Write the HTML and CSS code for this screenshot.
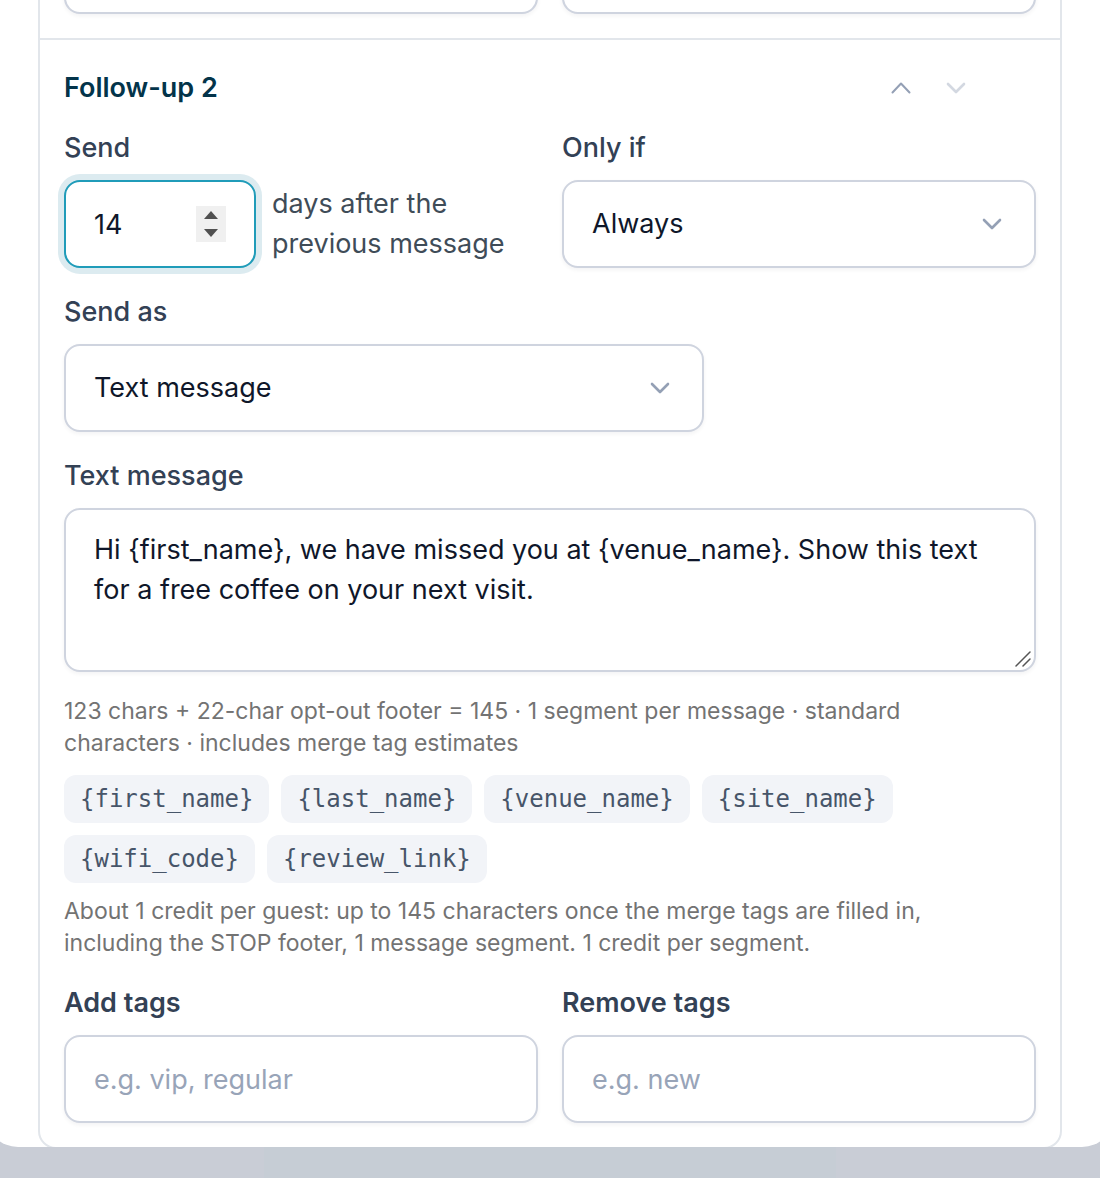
FILE: index.html
```html
<!DOCTYPE html>
<html lang="en">
  <head>
    <meta charset="UTF-8" />
    <meta name="viewport" content="width=device-width, initial-scale=1.0" />
    <title>Follow-up messages</title>
    <link rel="stylesheet" href="styles.css">
  </head>
  <body>
    <main class="modal">
      <form class="steps">
        <section class="step">
          <div class="row">
            <input class="control" type="text" aria-label="Add tags to follow-up 1">
            <input class="control" type="text" aria-label="Remove tags from follow-up 1">
          </div>
        </section>

        <section class="step">
          <header class="step-header">
            <h2>Follow-up 2</h2>
            <div class="step-actions">
              <button type="button" class="icon-button" aria-label="Move up">
                <svg viewBox="0 0 32 32"><path d="M8.500 20.500l8.500-9 8.500 9" /></svg>
              </button>
              <button type="button" class="icon-button" aria-label="Move down" disabled>
                <svg class="bold" viewBox="0 0 32 32"><path d="M8 12l8 8 8-8" /></svg>
              </button>
            </div>
          </header>

          <div class="row">
            <div class="field">
              <label for="delay">Send</label>
              <div class="delay">
                <div class="number">
                  <input class="control focused" id="delay" type="number" value="14">
                  <div class="spinner">
                    <button type="button" aria-label="More days">
                      <svg viewBox="0 0 14 8"><path d="M7 0l7 8H0z" /></svg>
                    </button>
                    <button type="button" aria-label="Fewer days">
                      <svg viewBox="0 0 14 8"><path d="M0 0h14L7 8z" /></svg>
                    </button>
                  </div>
                </div>
                <span class="delay-text">days after the previous message</span>
              </div>
            </div>
            <div class="field">
              <label for="condition">Only if</label>
              <div class="select">
                <select class="control" id="condition">
                  <option>Always</option>
                </select>
                <svg class="bold" viewBox="0 0 32 32"><path d="M8 12l8 8 8-8" /></svg>
              </div>
            </div>
          </div>

          <div class="field channel">
            <label for="channel">Send as</label>
            <div class="select">
              <select class="control" id="channel">
                <option>Text message</option>
              </select>
              <svg class="bold" viewBox="0 0 32 32"><path d="M8 12l8 8 8-8" /></svg>
            </div>
          </div>

          <div class="field">
            <label for="message">Text message</label>
            <div class="message">
              <textarea class="control" id="message" rows="3">Hi {first_name}, we have missed you at {venue_name}. Show this text for a free coffee on your next visit.</textarea>
              <svg viewBox="0 0 16 16"><path d="M1 15L15 1M8 15l7-7" /></svg>
            </div>
            <p class="hint count">123 chars + 22-char opt-out footer = 145 · 1 segment per message · standard characters · includes merge tag estimates</p>
            <div class="merge-tags">
              <button type="button">{first_name}</button>
              <button type="button">{last_name}</button>
              <button type="button">{venue_name}</button>
              <button type="button">{site_name}</button>
              <button type="button">{wifi_code}</button>
              <button type="button">{review_link}</button>
            </div>
            <p class="hint">About 1 credit per guest: up to 145 characters once the merge tags are filled in, including the STOP footer, 1 message segment. 1 credit per segment.</p>
          </div>

          <div class="row">
            <div class="field strong">
              <label for="add-tags">Add tags</label>
              <input class="control" id="add-tags" type="text" placeholder="e.g. vip, regular">
            </div>
            <div class="field strong">
              <label for="remove-tags">Remove tags</label>
              <input class="control" id="remove-tags" type="text" placeholder="e.g. new">
            </div>
          </div>
        </section>
      </form>
    </main>
  </body>
</html>
```
FILE: styles.css
```css
* {
  box-sizing: border-box;
}

body {
  margin: 0;
  overflow: hidden;
  background: linear-gradient(90deg, #c9cdd6 24%, #c6cdd5 24%, #c6cdd5 76%, #c9cdd6 76%);
  color: #334155;
  font-family: Inter, "Liberation Sans", sans-serif;
  font-size: 27px;
  line-height: 40px;
}

/* the dialog is a little wider than the window and scrolled to its end */
.modal {
  display: flex;
  flex-direction: column;
  justify-content: flex-end;
  height: calc(100vh - 31px);
  margin: 0 -14px;
  padding: 0 52px;
  background: white;
  border-radius: 0 0 32px 32px;
  overflow: hidden;
}

.steps {
  margin-bottom: -2px;
  border: 2px solid #e2e6eb;
  border-radius: 18px;
}

.step {
  display: flex;
  flex-direction: column;
  gap: 24px;
  padding: 24px;
}

.step + .step {
  border-top: 2px solid #e2e6eb;
}

.step-header {
  display: flex;
  align-items: center;
  justify-content: space-between;
  height: 48px;
  margin-bottom: -8px;
}

h2 {
  margin: 0;
  color: #03344a;
  font-size: 27px;
  font-weight: 600;
}

.step-actions {
  display: flex;
  gap: 8px;
  padding-right: 56px;
}

button {
  border: none;
  padding: 0;
  font: inherit;
}

svg {
  display: block;
  fill: none;
  stroke: #94a0b5;
  stroke-width: 2;
  stroke-linecap: round;
  stroke-linejoin: round;
}

svg.bold {
  stroke-width: 2.6;
}

.icon-button {
  width: 48px;
  height: 48px;
  padding: 8px;
  background: none;
}

.icon-button:disabled {
  opacity: 0.4;
}

.row {
  display: grid;
  grid-template-columns: 1fr 1fr;
  gap: 24px;
}

.field {
  display: flex;
  flex-direction: column;
}

label {
  margin-bottom: 12px;
  font-weight: 500;
}

.strong label {
  font-weight: 600;
}

.control {
  display: block;
  width: 100%;
  height: 88px;
  margin: 0;
  padding: 20px 28px;
  background: white;
  border: 2px solid #cfd4df;
  border-radius: 16px;
  box-shadow: 0 2px 4px rgba(15, 23, 42, 0.05);
  color: #0f172a;
  font: inherit;
  outline: none;
  appearance: none;
}

.control::placeholder {
  color: #98a4b8;
  opacity: 1;
}

.control.focused {
  border-color: #209cb9;
  box-shadow: 0 0 0 6px #dcebf0;
}

.delay {
  display: flex;
  align-items: center;
  gap: 16px;
}

.number {
  position: relative;
  flex: none;
  width: 192px;
}

.number input {
  appearance: textfield;
}

.number input::-webkit-inner-spin-button {
  appearance: none;
}

.spinner {
  position: absolute;
  top: 26px;
  right: 30px;
  display: flex;
  flex-direction: column;
  width: 30px;
  height: 36px;
  background: #f0f0f0;
}

.spinner button {
  display: flex;
  flex: 1;
  align-items: center;
  justify-content: center;
  background: none;
}

.spinner svg {
  width: 14px;
  height: 8px;
  fill: #505050;
  stroke: none;
}

.delay-text {
  color: #3f4c58;
}

.channel {
  width: 640px;
  max-width: 100%;
}

.select,
.message {
  position: relative;
}

.select svg {
  position: absolute;
  top: 28px;
  right: 28px;
  width: 32px;
  height: 32px;
  pointer-events: none;
}

.message .control {
  height: 164px;
  resize: none;
}

.message svg {
  position: absolute;
  right: 5px;
  bottom: 5px;
  width: 16px;
  height: 16px;
  stroke: #555;
  stroke-width: 1.5;
  pointer-events: none;
}

.hint {
  margin: 0;
  padding-right: 32px;
  color: #737373;
  font-size: 23px;
  line-height: 32px;
}

.count {
  margin-top: 23px;
}

.merge-tags {
  display: flex;
  flex-wrap: wrap;
  gap: 12px;
  margin: 16px 0 12px;
}

.merge-tags button {
  height: 48px;
  padding: 0 16px;
  background: #f2f4f8;
  border-radius: 12px;
  color: #475569;
  font-family: "DejaVu Sans Mono", monospace;
  font-size: 24px;
}
```
